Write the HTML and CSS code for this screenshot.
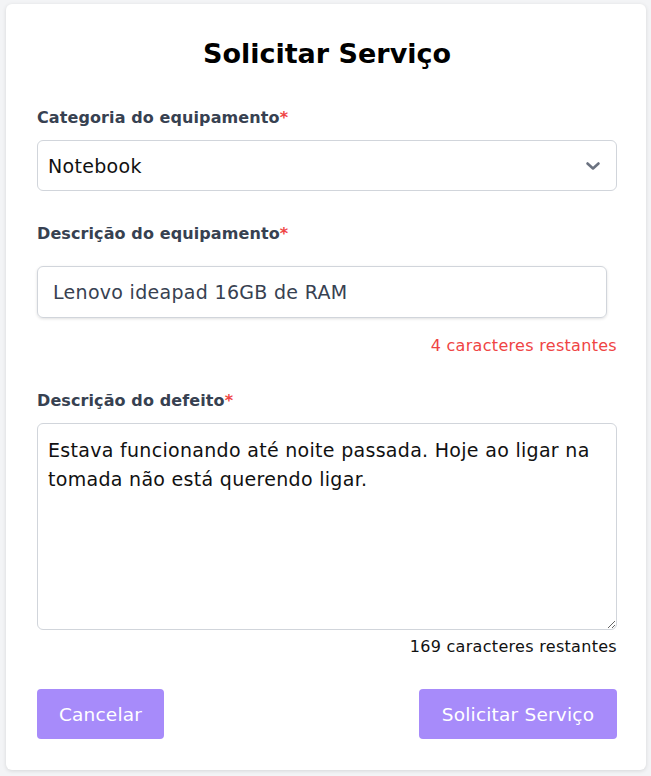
FILE: index.html
```html
<!DOCTYPE html>
<html lang="pt">
<head>
<meta charset="utf-8">
<link rel="stylesheet" href="styles.css">
</head>
<body>
<div class="card">
  <h1 class="title">Solicitar Serviço</h1>
  <div class="field">
    <label class="label">Categoria do equipamento<span class="req">*</span></label>
    <div class="select">
      <span>Notebook</span>
      <svg class="chev" width="16" height="16" viewBox="0 0 16 16"><path d="M2.5 5.5l5.5 5 5.5-5" fill="none" stroke="#6b7280" stroke-width="2.6" stroke-linecap="round" stroke-linejoin="round"/></svg>
    </div>
  </div>
  <div class="field">
    <label class="label label-spaced">Descrição do equipamento<span class="req">*</span></label>
    <div class="input">Lenovo ideapad 16GB de RAM</div>
    <div class="count red">4 caracteres restantes</div>
  </div>
  <div class="field">
    <label class="label">Descrição do defeito<span class="req">*</span></label>
    <textarea class="textarea">Estava funcionando até noite passada. Hoje ao ligar na
tomada não está querendo ligar.</textarea>
    <div class="count">169 caracteres restantes</div>
  </div>
  <div class="actions">
    <button class="btn btn-cancel">Cancelar</button>
    <button class="btn btn-submit">Solicitar Serviço</button>
  </div>
</div>
</body>
</html>
```
FILE: styles.css
```css
html, body { margin: 0; padding: 0; }
body {
  background: #f3f4f6;
  font-family: "DejaVu Sans", "Open Sans", sans-serif;
  padding: 4px 5px 6px 6px;
}
.card {
  background: #fff;
  border-radius: 6px;
  box-shadow: 0 1px 4px rgba(0,0,0,0.12);
  padding: 31px 29px 30px 31px;
  height: 766px;
  box-sizing: border-box;
}
.title {
  margin: 0 0 34px;
  text-align: center;
  font-family: "DejaVu Sans", sans-serif;
  font-weight: 700;
  font-size: 27px;
  line-height: 38px;
  color: #000;
}
.field { display: flex; flex-direction: column; }
.label {
  font-weight: 700;
  font-size: 16px;
  letter-spacing: 0.1px;
  line-height: 22px;
  color: #374151;
  margin-bottom: 11px;
}
.label-spaced { margin-bottom: 21px; }
.req { color: #ef4444; }
.select {
  display: flex;
  align-items: center;
  justify-content: space-between;
  height: 51px;
  box-sizing: border-box;
  border: 1px solid #d1d5db;
  border-radius: 6px;
  padding: 0 15px 0 10px;
  font-size: 19px;
  letter-spacing: 0.3px;
  color: #111;
  margin-bottom: 32px;
}
.input {
  width: 570px;
  height: 52px;
  box-sizing: border-box;
  border: 1px solid #d1d5db;
  border-radius: 6px;
  box-shadow: 0 1px 3px rgba(0,0,0,0.12);
  padding: 0 15px;
  display: flex;
  align-items: center;
  font-size: 19px;
  letter-spacing: 0.3px;
  color: #374151;
}
.count {
  text-align: right;
  font-size: 16px;
  letter-spacing: 0.3px;
  line-height: 22px;
  color: #111;
}
.red { color: #ef4444; margin-top: 17px; margin-bottom: 33px; }
.textarea {
  height: 207px;
  box-sizing: border-box;
  border: 1px solid #d1d5db;
  border-radius: 6px;
  padding: 12px 10px;
  font-family: "DejaVu Sans", sans-serif;
  font-size: 19px;
  letter-spacing: 0.3px;
  line-height: 29px;
  color: #111;
  resize: vertical;
  margin: 0 0 6px;
}
.actions {
  display: flex;
  justify-content: space-between;
  margin-top: 31px;
}
.btn {
  background: #a78bfa;
  color: #fff;
  border: none;
  border-radius: 4px;
  height: 50px;
  padding: 0;
  font-family: "DejaVu Sans", sans-serif;
  font-size: 18.5px;
  letter-spacing: 0.2px;
}
.btn-cancel { width: 127px; }
.btn-submit { width: 198px; }
```
